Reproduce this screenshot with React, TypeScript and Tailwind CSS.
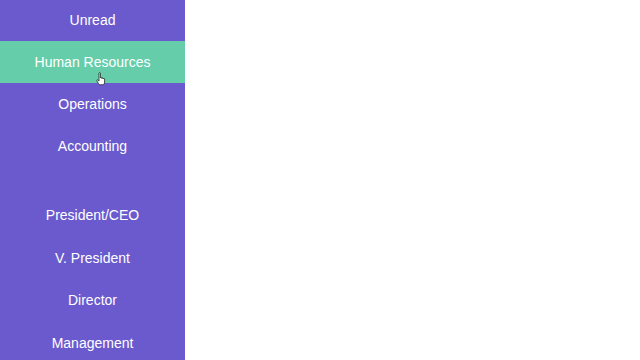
import React from "react";

const groupA = ["Unread", "Human Resources", "Operations", "Accounting"];
const groupB = ["President/CEO", "V. President", "Director", "Management"];

function Row({ label, active, tall }: { label: string; active?: boolean; tall?: boolean }) {
  return (
    <div
      className={
        "relative shrink-0 flex items-center justify-center pt-[1px] text-[14px] text-white " +
        (tall ? "h-[42.5px] " : "h-[42px] ") +
        (active ? "bg-[#66cdaa]" : "")
      }
    >
      {label}
      {active && (
        <svg
          className="absolute left-[96px] top-[31px]"
          width="11"
          height="14"
          viewBox="0 0 11 14"
        >
          <path
            d="M3 1.2 C3 0.5 4.4 0.5 4.4 1.2 V6 C4.4 5.3 5.8 5.3 5.8 6 V6.5 C5.8 5.8 7.2 5.8 7.2 6.5 V7 C7.2 6.3 8.6 6.3 8.6 7 V10 C8.6 11.5 7.8 12.8 6.8 12.8 H4.2 C3.4 12.8 2.8 12 2.2 11.2 L0.8 8.8 C0.4 8.1 1.3 7.4 1.9 8 L3 9.1 Z"
            fill="#ffffff"
            stroke="#222"
            strokeWidth="0.8"
            strokeLinejoin="round"
          />
        </svg>
      )}
    </div>
  );
}

export default function App() {
  return (
    <div
      className="w-[640px] h-[360px] bg-white flex overflow-hidden"
      style={{ fontFamily: '"Liberation Sans", Arial, sans-serif' }}
    >
      <div className="w-[185px] h-[362px] bg-[#6a5acd] flex flex-col mt-[-1px]">
        {groupA.map((l) => (
          <Row key={l} label={l} active={l === "Human Resources"} />
        ))}
        <div className="h-[27px] shrink-0" />
        {groupB.map((l) => (
          <Row key={l} label={l} tall />
        ))}
      </div>
      <div className="flex-1 bg-white" />
    </div>
  );
}
